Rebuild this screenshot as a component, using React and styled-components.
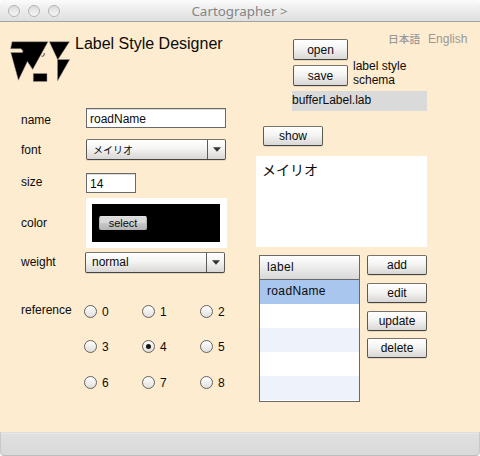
import React from "react";
import styled, { createGlobalStyle, css } from "styled-components";

const Global = createGlobalStyle`
  * { box-sizing: border-box; }
  body {
    margin: 0;
    background: #fff;
    overflow: hidden;
    font: 12px/14px "Liberation Sans", "Noto Sans CJK JP", sans-serif;
    color: #0b0b0b;
  }
  button, input { font: inherit; color: inherit; margin: 0; padding: 0; outline: 0; }
`;

const face = css`
  background: linear-gradient(#fff 0%, #f4f4f3 45%, #d9d7d5 100%);
  border: 1px solid #5c5a54;
  border-top-color: #77746a;
  border-bottom-color: #444;
  border-radius: 2px;
  box-shadow: 0 1px 0 rgba(120, 110, 90, 0.18);
`;

const Window = styled.div`
  width: 480px;
  height: 456px;
  display: flex;
  flex-direction: column;
  background: #fdecd0;
  border-radius: 5px 5px 4px 4px;
  overflow: hidden;
`;

const TitleBar = styled.header`
  height: 22px;
  flex: none;
  display: grid;
  grid-template-columns: 64px 1fr 64px;
  align-items: center;
  padding-left: 8px;
  padding-right: 9px;
  background: linear-gradient(#fbfbfb, #ececec 50%, #dfdfdf);
  border-bottom: 1px solid #a5a4a5;
`;

const Lights = styled.div`
  display: flex;
  gap: 8px;
`;

const Light = styled.i`
  width: 12px;
  height: 12px;
  border-radius: 50%;
  border: 1px solid #b3b3b3;
  background: linear-gradient(#dcdcdc, #f5f5f5);
`;

const WindowTitle = styled.div`
  text-align: center;
  color: #858585;
  font: 13.4px/20px "Noto Sans", sans-serif;
  white-space: nowrap;
`;

const Body = styled.main`
  flex: 1;
  display: flex;
`;

const LeftPane = styled.section`
  width: 256px;
  flex: none;
  padding: 13px 0 0 10px;
`;

const Brand = styled.div`
  display: flex;
  height: 73px;
`;

const Logo = styled.svg`
  width: 60px;
  height: 42px;
  flex: none;
  margin-top: 6px;
  margin-right: 5px;
`;

const Heading = styled.h1`
  margin: 0;
  font-size: 16px;
  line-height: 18px;
  font-weight: 400;
  white-space: nowrap;
`;

const FieldRow = styled.div`
  display: flex;
  padding-left: 11px;
  height: ${(p) => p.$height}px;
`;

const FieldLabel = styled.label`
  width: ${(p) => p.$width || 65}px;
  flex: none;
  margin-top: ${(p) => p.$drop}px;
`;

const TextField = styled.input`
  width: ${(p) => p.$width}px;
  height: 20px;
  padding: 2px 0 0 3px;
  border: 1px solid #696969;
  background: linear-gradient(#dcdcdc 0 1px, #fff 1px);
`;

const Select = styled.div`
  ${face}
  width: 140px;
  height: 21px;
  display: flex;
  justify-content: space-between;
`;

const SelectValue = styled.span`
  padding-left: 6px;
  font-size: ${(p) => p.$size || 12}px;
  line-height: ${(p) => p.$line || 19}px;
`;

const SelectArrow = styled.span`
  width: 18px;
  display: grid;
  place-items: center;
  border-left: 1px solid #5c5a54;
`;

const ColorPanel = styled.div`
  width: 141px;
  height: 50px;
  padding: 6px 7px 6px 6px;
  background: #fff;
`;

const Swatch = styled.div`
  height: 38px;
  padding: 12px 7px;
  background: #000;
`;

const SwatchButton = styled.button`
  display: block;
  width: 48px;
  height: 14px;
  border: 1px solid #b4b4b4;
  border-top-color: #e2e2e2;
  border-radius: 2px;
  background: linear-gradient(#dadada 0 45%, #c6c6c6 55%, #b8b8b8);
  font-size: 11px;
  line-height: 12px;
`;

const RadioGrid = styled.div`
  display: grid;
  grid-template-columns: repeat(3, 58px);
  grid-template-rows: 35px 36px 14px;
`;

const RadioItem = styled.label`
  display: flex;
  gap: 5px;
  height: 14px;
`;

const Dial = styled.i`
  width: 13px;
  height: 13px;
  display: grid;
  place-items: center;
  border: 1px solid #65625c;
  border-radius: 50%;
  background: linear-gradient(#fff, #dfdfde);

  &::after {
    content: "";
    width: 5px;
    height: 5px;
    border-radius: 50%;
    background: ${(p) => (p.$on ? "#161616" : "transparent")};
  }
`;

const RightPane = styled.section`
  flex: 1;
  padding-top: 10px;
`;

const TopRow = styled.div`
  display: flex;
  height: 59px;
  padding-left: 37px;
`;

const FileButtons = styled.div`
  width: 55px;
  padding-top: 7px;
  display: flex;
  flex-direction: column;
  gap: 5px;
`;

const PushButton = styled.button`
  ${face}
  display: block;
  width: ${(p) => p.$width || 60}px;
  height: ${(p) => p.$height || 20}px;
  line-height: 18px;
`;

const FileInfo = styled.div`
  padding-left: 5px;
`;

const Languages = styled.nav`
  display: flex;
  gap: 8px;
  height: 20px;
  margin-left: 35px;
  color: #999;
`;

const Language = styled.span`
  font-size: ${(p) => p.$size}px;
  line-height: 14px;
  font-weight: ${(p) => p.$weight || 400};
`;

const Schema = styled.div`
  margin-top: 7px;
  width: 60px;
`;

const FileName = styled.div`
  width: 135px;
  height: 20px;
  margin-left: 36px;
  padding-top: 2px;
  background: #dadada;
`;

const ShowRow = styled.div`
  padding: 15px 0 10px 7px;
`;

const Preview = styled.div`
  width: 171px;
  height: 91px;
  padding: 3px 6px;
  background: #fff;
  font: 14px/20px "Noto Sans CJK JP", sans-serif;
`;

const ListRow = styled.div`
  display: flex;
  gap: 7px;
  padding: 8px 0 0 3px;
`;

const Table = styled.div`
  width: 101px;
  height: 147px;
  border: 1px solid #696969;
  background: #fff;
  letter-spacing: 0.35px;
`;

const TableHead = styled.div`
  height: 24px;
  padding: 4px 7px;
  border-bottom: 1px solid #696969;
  background: linear-gradient(#fff, #d8d8d8);
`;

const TableRow = styled.div`
  height: 24px;
  padding: 4px 7px;
  background: ${(p) => p.$fill};
`;

const Actions = styled.div`
  display: flex;
  flex-direction: column;
  gap: 8px;

  button:last-child { margin-top: -1px; }
`;

const StatusBar = styled.footer`
  height: 24px;
  flex: none;
  border: 1px solid #c9c9c9;
  border-top-color: #dedede;
  border-bottom-color: #bdbdbd;
  border-radius: 0 0 4px 4px;
  background: linear-gradient(#e9e9e9 0 1px, #e0e0e0 1px, #d9d9d9);
`;

const Arrow = () => (
  <svg width="8" height="5" viewBox="0 0 8 5">
    <path d="M0 0.2H8L4 4.8Z" fill="#333" />
  </svg>
);

const Combo = ({ children, size, line }) => (
  <Select>
    <SelectValue $size={size} $line={line}>{children}</SelectValue>
    <SelectArrow><Arrow /></SelectArrow>
  </Select>
);

const rows = ["#a8c6ee", "#fff", "#eef3fb", "#fff", "#eef3fb"];

export default function App() {
  return (
    <>
      <Global />
      <Window>
        <TitleBar>
          <Lights><Light /><Light /><Light /></Lights>
          <WindowTitle>Cartographer &gt;</WindowTitle>
        </TitleBar>
        <Body>
          <LeftPane>
            <Brand>
              <Logo viewBox="0 0 60 42">
                <g stroke="#9b9890" strokeWidth="0.5">
                  <path d="M2 .7H38L22.7 28.5L17.4 20.5L8.4 39.3L.8 11.5H12.7V9.5L11 7.7H.6Z" />
                  <path d="M39.3 .7H59.5L48 18.5H59.7L47.5 40V18.3Z" />
                  <path d="M23.3 32.5H37V40.5H23.3Z" />
                </g>
                <path d="M34 10.5L31 16L34.3 14.5Z" fill="#fdecd0" />
                <path d="M34.2 12.2C34.6 14.6 33 16 31.6 15" fill="none" stroke="#333" strokeWidth="1" />
              </Logo>
              <Heading>Label Style Designer</Heading>
            </Brand>
            <FieldRow $height={31}>
              <FieldLabel $drop={5}>name</FieldLabel>
              <TextField $width={140} defaultValue="roadName" />
            </FieldRow>
            <FieldRow $height={34}>
              <FieldLabel $drop={4}>font</FieldLabel>
              <Combo size={10} line={21}>メイリオ</Combo>
            </FieldRow>
            <FieldRow $height={25}>
              <FieldLabel $drop={2}>size</FieldLabel>
              <TextField $width={50} defaultValue="14" />
            </FieldRow>
            <FieldRow $height={54}>
              <FieldLabel $drop={18}>color</FieldLabel>
              <ColorPanel>
                <Swatch><SwatchButton>select</SwatchButton></Swatch>
              </ColorPanel>
            </FieldRow>
            <FieldRow $height={53}>
              <FieldLabel $drop={3} $width={64}>weight</FieldLabel>
              <Combo>normal</Combo>
            </FieldRow>
            <FieldRow $height={90}>
              <FieldLabel $drop={-2} $width={63}>reference</FieldLabel>
              <RadioGrid>
                {[0, 1, 2, 3, 4, 5, 6, 7, 8].map((n) => (
                  <RadioItem key={n}><Dial $on={n === 4} />{n}</RadioItem>
                ))}
              </RadioGrid>
            </FieldRow>
          </LeftPane>
          <RightPane>
            <TopRow>
              <FileButtons>
                <PushButton $width={55} $height={21}>open</PushButton>
                <PushButton $width={55} $height={21}>save</PushButton>
              </FileButtons>
              <FileInfo>
                <Languages>
                  <Language $size={10.7} $weight={500}>日本語</Language>
                  <Language $size={12}>English</Language>
                </Languages>
                <Schema>label style schema</Schema>
              </FileInfo>
            </TopRow>
            <FileName>bufferLabel.lab</FileName>
            <ShowRow><PushButton>show</PushButton></ShowRow>
            <Preview>メイリオ</Preview>
            <ListRow>
              <Table>
                <TableHead>label</TableHead>
                {rows.map((fill, i) => (
                  <TableRow key={i} $fill={fill}>{i === 0 ? "roadName" : ""}</TableRow>
                ))}
              </Table>
              <Actions>
                <PushButton>add</PushButton>
                <PushButton>edit</PushButton>
                <PushButton>update</PushButton>
                <PushButton>delete</PushButton>
              </Actions>
            </ListRow>
          </RightPane>
        </Body>
        <StatusBar />
      </Window>
    </>
  );
}
